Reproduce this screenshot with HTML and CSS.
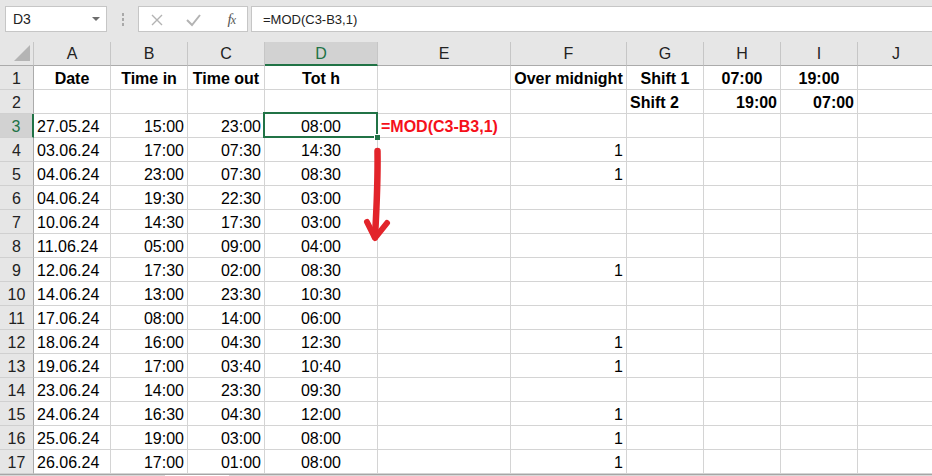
FILE: index.html
```html
<!DOCTYPE html>
<html>
<head>
<meta charset="utf-8">
<link rel="stylesheet" href="styles.css">
</head>
<body>
<div class="app">
  <div class="toolbar">
    <div class="namebox"><span>D3</span><i class="caret"></i></div>
    <div class="dots"><i></i><i></i><i></i></div>
    <div class="fxbox">
      <svg class="ico" width="110" height="26" viewBox="0 0 110 26">
        <path d="M14 9 L24 19 M24 9 L14 19" stroke="#b3b3b3" stroke-width="1.4" fill="none"/>
        <path d="M49 14 L54 19 L62 9" stroke="#b3b3b3" stroke-width="2" fill="none"/>
      </svg>
      <span class="fx">f<span class="fxx">x</span></span>
    </div>
    <div class="formula">=MOD(C3-B3,1)</div>
  </div>

  <div class="sheet">
    <div class="corner"><i class="tri"></i></div>
    <div class="ch">A</div><div class="ch">B</div><div class="ch">C</div><div class="ch sel">D</div><div class="ch">E</div><div class="ch">F</div><div class="ch">G</div><div class="ch">H</div><div class="ch">I</div><div class="ch">J</div>

    <div class="rh">1</div>
    <div class="c m b">Date</div><div class="c m b">Time in</div><div class="c m b">Time out</div><div class="c m b">Tot h</div><div class="c"></div><div class="c m b">Over midnight</div><div class="c m b">Shift 1</div><div class="c m b">07:00</div><div class="c m b">19:00</div><div class="c"></div>

    <div class="rh">2</div>
    <div class="c"></div><div class="c"></div><div class="c"></div><div class="c"></div><div class="c"></div><div class="c"></div><div class="c b">Shift 2</div><div class="c r b">19:00</div><div class="c r b">07:00</div><div class="c"></div>

    <div class="rh sel">3</div>
    <div class="c">27.05.24</div><div class="c r">15:00</div><div class="c r">23:00</div><div class="c m active">08:00<i class="handle"></i></div><div class="c red">=MOD(C3-B3,1)</div><div class="c"></div><div class="c"></div><div class="c"></div><div class="c"></div><div class="c"></div>

    <div class="rh">4</div>
    <div class="c">03.06.24</div><div class="c r">17:00</div><div class="c r">07:30</div><div class="c m">14:30</div><div class="c"></div><div class="c r">1</div><div class="c"></div><div class="c"></div><div class="c"></div><div class="c"></div>

    <div class="rh">5</div>
    <div class="c">04.06.24</div><div class="c r">23:00</div><div class="c r">07:30</div><div class="c m">08:30</div><div class="c"></div><div class="c r">1</div><div class="c"></div><div class="c"></div><div class="c"></div><div class="c"></div>

    <div class="rh">6</div>
    <div class="c">04.06.24</div><div class="c r">19:30</div><div class="c r">22:30</div><div class="c m">03:00</div><div class="c"></div><div class="c"></div><div class="c"></div><div class="c"></div><div class="c"></div><div class="c"></div>

    <div class="rh">7</div>
    <div class="c">10.06.24</div><div class="c r">14:30</div><div class="c r">17:30</div><div class="c m">03:00</div><div class="c"></div><div class="c"></div><div class="c"></div><div class="c"></div><div class="c"></div><div class="c"></div>

    <div class="rh">8</div>
    <div class="c">11.06.24</div><div class="c r">05:00</div><div class="c r">09:00</div><div class="c m">04:00</div><div class="c"></div><div class="c"></div><div class="c"></div><div class="c"></div><div class="c"></div><div class="c"></div>

    <div class="rh">9</div>
    <div class="c">12.06.24</div><div class="c r">17:30</div><div class="c r">02:00</div><div class="c m">08:30</div><div class="c"></div><div class="c r">1</div><div class="c"></div><div class="c"></div><div class="c"></div><div class="c"></div>

    <div class="rh">10</div>
    <div class="c">14.06.24</div><div class="c r">13:00</div><div class="c r">23:30</div><div class="c m">10:30</div><div class="c"></div><div class="c"></div><div class="c"></div><div class="c"></div><div class="c"></div><div class="c"></div>

    <div class="rh">11</div>
    <div class="c">17.06.24</div><div class="c r">08:00</div><div class="c r">14:00</div><div class="c m">06:00</div><div class="c"></div><div class="c"></div><div class="c"></div><div class="c"></div><div class="c"></div><div class="c"></div>

    <div class="rh">12</div>
    <div class="c">18.06.24</div><div class="c r">16:00</div><div class="c r">04:30</div><div class="c m">12:30</div><div class="c"></div><div class="c r">1</div><div class="c"></div><div class="c"></div><div class="c"></div><div class="c"></div>

    <div class="rh">13</div>
    <div class="c">19.06.24</div><div class="c r">17:00</div><div class="c r">03:40</div><div class="c m">10:40</div><div class="c"></div><div class="c r">1</div><div class="c"></div><div class="c"></div><div class="c"></div><div class="c"></div>

    <div class="rh">14</div>
    <div class="c">23.06.24</div><div class="c r">14:00</div><div class="c r">23:30</div><div class="c m">09:30</div><div class="c"></div><div class="c"></div><div class="c"></div><div class="c"></div><div class="c"></div><div class="c"></div>

    <div class="rh">15</div>
    <div class="c">24.06.24</div><div class="c r">16:30</div><div class="c r">04:30</div><div class="c m">12:00</div><div class="c"></div><div class="c r">1</div><div class="c"></div><div class="c"></div><div class="c"></div><div class="c"></div>

    <div class="rh">16</div>
    <div class="c">25.06.24</div><div class="c r">19:00</div><div class="c r">03:00</div><div class="c m">08:00</div><div class="c"></div><div class="c r">1</div><div class="c"></div><div class="c"></div><div class="c"></div><div class="c"></div>

    <div class="rh">17</div>
    <div class="c">26.06.24</div><div class="c r">17:00</div><div class="c r">01:00</div><div class="c m">08:00</div><div class="c"></div><div class="c r">1</div><div class="c"></div><div class="c"></div><div class="c"></div><div class="c"></div>
  </div>

  <div class="tabs"><div class="tabgap"></div><div class="tab"></div><div class="tabrest"></div></div>

  <svg class="arrow" width="932" height="476" viewBox="0 0 932 476">
    <path d="M377.5 151 C378 180 376.5 210 375 237" stroke="#e2242a" stroke-width="6.5" stroke-linecap="round" fill="none"/>
    <path d="M367 222 L375 238 L387 223" stroke="#e2242a" stroke-width="6" stroke-linecap="round" stroke-linejoin="round" fill="none"/>
  </svg>
</div>
</body>
</html>
```
FILE: styles.css
```css
* { box-sizing: border-box; }
html, body { margin: 0; padding: 0; }
body {
  width: 932px;
  height: 476px;
  overflow: hidden;
  background: #ffffff;
  font-family: "Liberation Sans", Arial, sans-serif;
  color: #000;
}
.app {
  position: relative;
  width: 932px;
  height: 476px;
  overflow: hidden;
  background: #e6e6e6;
}

/* ---------- formula bar ---------- */
.toolbar {
  height: 42px;
  display: flex;
  align-items: flex-start;
  padding-top: 6px;
  background: #e6e6e6;
}
.namebox {
  margin-left: 5px;
  width: 102px;
  height: 26px;
  background: #fff;
  border: 1px solid #c6c6c6;
  display: flex;
  align-items: center;
  justify-content: space-between;
  padding: 0 6px 0 7px;
  font-size: 14px;
  color: #222;
}
.caret {
  width: 0;
  height: 0;
  border-left: 4px solid transparent;
  border-right: 4px solid transparent;
  border-top: 4px solid #6d6d6d;
}
.dots {
  width: 31px;
  height: 26px;
  display: flex;
  flex-direction: column;
  align-items: center;
  justify-content: center;
  gap: 2px;
}
.dots i {
  display: block;
  width: 2px;
  height: 3px;
  background: #a9a9a9;
}
.fxbox {
  position: relative;
  width: 110px;
  height: 26px;
  background: #fff;
  border: 1px solid #c6c6c6;
  display: flex;
  align-items: center;
  justify-content: flex-end;
  padding-right: 12px;
}
.fxbox .ico {
  position: absolute;
  left: -1px;
  top: -1px;
}
.fx {
  font-family: "Liberation Serif", serif;
  font-style: italic;
  font-size: 15px;
  color: #555;
  letter-spacing: -1px;
}
.fxx { font-size: 12px; }
.formula {
  margin-left: 3px;
  flex: 1;
  margin-right: -3px;
  height: 26px;
  background: #fff;
  border: 1px solid #c6c6c6;
  display: flex;
  align-items: center;
  padding-left: 11px;
  font-size: 13px;
  color: #222;
}

/* ---------- sheet ---------- */
.sheet {
  display: grid;
  grid-template-columns: 34px 77px 77px 77px 113px 133px 116px 77px 77px 77px 77px;
  grid-auto-rows: 24px;
  width: 935px;
  background: #fff;
}
.corner {
  position: relative;
  background: #e6e6e6;
  border-right: 1px solid #c6c6c6;
  border-bottom: 1px solid #ababab;
}
.tri {
  position: absolute;
  left: 14px;
  top: 3px;
  width: 0;
  height: 0;
  border-left: 16px solid transparent;
  border-bottom: 16px solid #b4b4b4;
}
.ch {
  background: #e6e6e6;
  border-right: 1px solid #c6c6c6;
  border-bottom: 1px solid #ababab;
  display: flex;
  align-items: center;
  justify-content: center;
  font-size: 16px;
  color: #222;
  padding-top: 1px;
}
.ch.sel {
  background: #d2d2d2;
  color: #217346;
  border-bottom: 2px solid #217346;
}
.rh {
  background: #e6e6e6;
  border-right: 1px solid #ababab;
  border-bottom: 1px solid #d0d0d0;
  display: flex;
  align-items: center;
  justify-content: center;
  font-size: 16px;
  color: #222;
  padding-top: 2px;
}
.rh.sel {
  background: #d2d2d2;
  color: #217346;
  border-right: 2px solid #217346;
}
.c {
  position: relative;
  border-right: 1px solid #d4d4d4;
  border-bottom: 1px solid #d4d4d4;
  display: flex;
  align-items: center;
  padding: 2px 3px 0;
  font-size: 16px;
  white-space: nowrap;
}
.r { justify-content: flex-end; }
.m { justify-content: center; }
.b { font-weight: bold; }
.red {
  color: #f5101a;
  font-weight: bold;
  padding-left: 3px;
}
.active::after {
  content: "";
  position: absolute;
  left: -2px;
  top: -2px;
  right: -1px;
  bottom: -1px;
  border: 2px solid #217346;
}
.handle {
  position: absolute;
  right: -3px;
  bottom: -3px;
  width: 6px;
  height: 6px;
  background: #217346;
  border: 1px solid #fff;
  border-right: none;
  border-bottom: none;
  z-index: 2;
}

/* ---------- bottom strip ---------- */
.tabs {
  display: flex;
  height: 3px;
  border-top: 1px solid #a6a6a6;
  background: #d9d9d9;
}
.tabgap { width: 165px; }
.tab { width: 64px; background: #fff; }
.tabrest { flex: 1; }

.arrow {
  position: absolute;
  left: 0;
  top: 0;
  pointer-events: none;
}
```
